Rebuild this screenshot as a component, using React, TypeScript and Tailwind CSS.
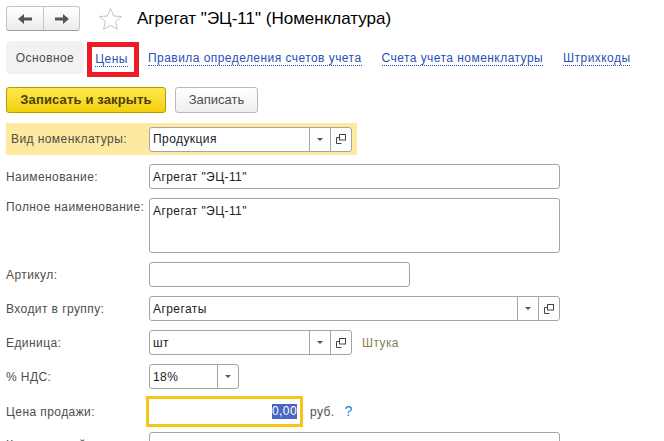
import React from 'react';

const Arrow = ({ flip }: { flip?: boolean }) => (
  <svg width="14" height="12" viewBox="0 0 14 12" className={flip ? 'rotate-180' : ''}>
    <path d="M0 6 L6 1 V4.5 H14 V7.5 H6 V11 Z" fill="#555555" />
  </svg>
);

const Star = () => (
  <svg width="25" height="24" viewBox="0 0 25 24">
    <path d="M12.5 1.5 L15.6 9 L23.6 9.5 L17.5 14.7 L19.5 22.5 L12.5 18.2 L5.5 22.5 L7.5 14.7 L1.4 9.5 L9.4 9 Z" fill="#ffffff" stroke="#c4c4c4" strokeWidth="1" />
  </svg>
);

const Caret = () => (
  <svg width="6" height="3" viewBox="0 0 6 3">
    <path d="M0 0 H6 L3 3 Z" fill="#555555" />
  </svg>
);

const OpenIcon = () => (
  <svg width="10" height="10" viewBox="0 0 10 10" fill="none" stroke="#444444" strokeWidth="1">
    <rect x="3.5" y="0.5" width="6" height="5.5" />
    <path d="M3.5 3.5 H0.5 V9.5 H5.5" />
  </svg>
);

const DropSection = () => (
  <div className="w-[21px] h-full shrink-0 border-l border-[#a5a5a5] flex items-center justify-center">
    <Caret />
  </div>
);

const OpenSection = () => (
  <div className="w-[21px] h-full shrink-0 border-l border-[#a5a5a5] flex items-center justify-center">
    <OpenIcon />
  </div>
);

const Field = ({ className, children, value }: { className: string; children?: React.ReactNode; value?: string }) => (
  <div className={`h-[25px] bg-white border border-[#a5a5a5] rounded-[3px] flex items-center text-[#222222] ${className}`}>
    <span className="flex-1 pl-[3px] whitespace-nowrap">{value}</span>
    {children}
  </div>
);

const Label = ({ children }: { children: React.ReactNode }) => (
  <div className="w-[143px] shrink-0 text-[#4d4d4d] whitespace-nowrap">{children}</div>
);

const Row = ({ label, children, className }: { label: string; children: React.ReactNode; className: string }) => (
  <div className={`flex items-center ${className}`}>
    <Label>{label}</Label>
    {children}
  </div>
);

const TabLink = ({ children, className }: { children: React.ReactNode; className: string }) => (
  <span className={`text-[#2a4fb5] border-b border-dotted border-[#2a4fb5] leading-[14px] whitespace-nowrap tracking-[0.45px] ${className}`}>
    {children}
  </span>
);

export default function App() {
  return (
    <div className="w-[664px] h-[441px] overflow-hidden bg-white px-[6px] pt-[6px] text-[12px] tracking-[0.42px] font-['Liberation_Sans',Arial,sans-serif]">
      {/* шапка */}
      <div className="flex items-center h-[25px]">
        <div className="w-[74px] h-[25px] flex rounded-[3px] border border-[#c4c4c4] border-b-[#a0a0a0] bg-gradient-to-b from-white to-[#ececec]">
          <div className="w-[37px] border-r border-[#c4c4c4] flex items-center justify-center">
            <Arrow />
          </div>
          <div className="flex-1 flex items-center justify-center">
            <Arrow flip />
          </div>
        </div>
        <div className="ml-[18px]">
          <Star />
        </div>
        <div className="ml-[14px] text-[17px] tracking-normal text-black whitespace-nowrap">Агрегат "ЭЦ-11" (Номенклатура)</div>
      </div>

      {/* вкладки */}
      <div className="flex items-center mt-[10px] h-[33px]">
        <div className="w-[78px] h-[33px] rounded-[5px] bg-[#f2f2f2] text-[#4d4d4d] flex items-center justify-center">Основное</div>
        <div className="ml-[3px] w-[52px] h-[35px] mt-[3px] border-[5px] border-[#ed1c24] flex items-center justify-center">
          <TabLink className="-ml-[3px]">Цены</TabLink>
        </div>
        <TabLink className="ml-[9px] mt-[1px]">Правила определения счетов учета</TabLink>
        <TabLink className="ml-[20px] mt-[1px]">Счета учета номенклатуры</TabLink>
        <TabLink className="ml-[20px] mt-[1px]">Штрихкоды</TabLink>
      </div>

      {/* кнопки */}
      <div className="flex mt-[13px] h-[26px]">
        <div className="w-[160px] rounded-[3px] border border-[#b39b00] bg-gradient-to-b from-[#fde84a] to-[#f4d000] text-[#4a4200] font-bold text-[13px] tracking-[0.15px] flex items-center justify-center">
          Записать и закрыть
        </div>
        <div className="ml-[9px] w-[83px] rounded-[3px] border border-[#b8b8b8] bg-gradient-to-b from-white to-[#efefef] text-[#4d4d4d] text-[13px] tracking-normal flex items-center justify-center">
          Записать
        </div>
      </div>

      {/* форма */}
      <div className="flex items-center w-[351px] h-[32px] mt-[10px] bg-[#fde9a0] pl-[5px]">
        <Label>Вид номенклатуры:</Label>
        <Field className="w-[203px] -ml-[5px]" value="Продукция">
          <DropSection />
          <OpenSection />
        </Field>
      </div>

      <Row label="Наименование:" className="mt-[9px]">
        <Field className="w-[411px]" value={'Агрегат "ЭЦ-11"'} />
      </Row>

      <div className="flex mt-[9px]">
        <div className="w-[143px] shrink-0 text-[#4d4d4d] whitespace-nowrap">Полное наименование:</div>
        <div className="w-[411px] h-[55px] bg-white border border-[#a5a5a5] rounded-[3px] pl-[3px] pt-[3px] text-[#222222]">Агрегат "ЭЦ-11"</div>
      </div>

      <Row label="Артикул:" className="mt-[9px]">
        <Field className="w-[261px]" />
      </Row>

      <Row label="Входит в группу:" className="mt-[9px]">
        <Field className="w-[411px]" value="Агрегаты">
          <DropSection />
          <OpenSection />
        </Field>
      </Row>

      <Row label="Единица:" className="mt-[9px]">
        <Field className="w-[203px]" value="шт">
          <DropSection />
          <OpenSection />
        </Field>
        <span className="ml-[10px] text-[#8a8052]">Штука</span>
      </Row>

      <Row label="% НДС:" className="mt-[9px]">
        <Field className="w-[90px]" value="18%">
          <DropSection />
        </Field>
      </Row>

      <Row label="Цена продажи:" className="mt-[7px]">
        <div className="-ml-[3px] w-[157px] h-[31px] border-[3px] border-[#f5c518] flex items-center justify-end pr-[3px]">
          <span className="bg-[#4a66c0] text-white leading-[15px]">0,00</span>
        </div>
        <span className="ml-[7px] text-[#4d4d4d]">руб.</span>
        <span className="ml-[10px] text-[14px] text-[#1d7fc4]">?</span>
      </Row>

      <Row label="Комментарий:" className="mt-[5px]">
        <Field className="w-[411px]" />
      </Row>
    </div>
  );
}
